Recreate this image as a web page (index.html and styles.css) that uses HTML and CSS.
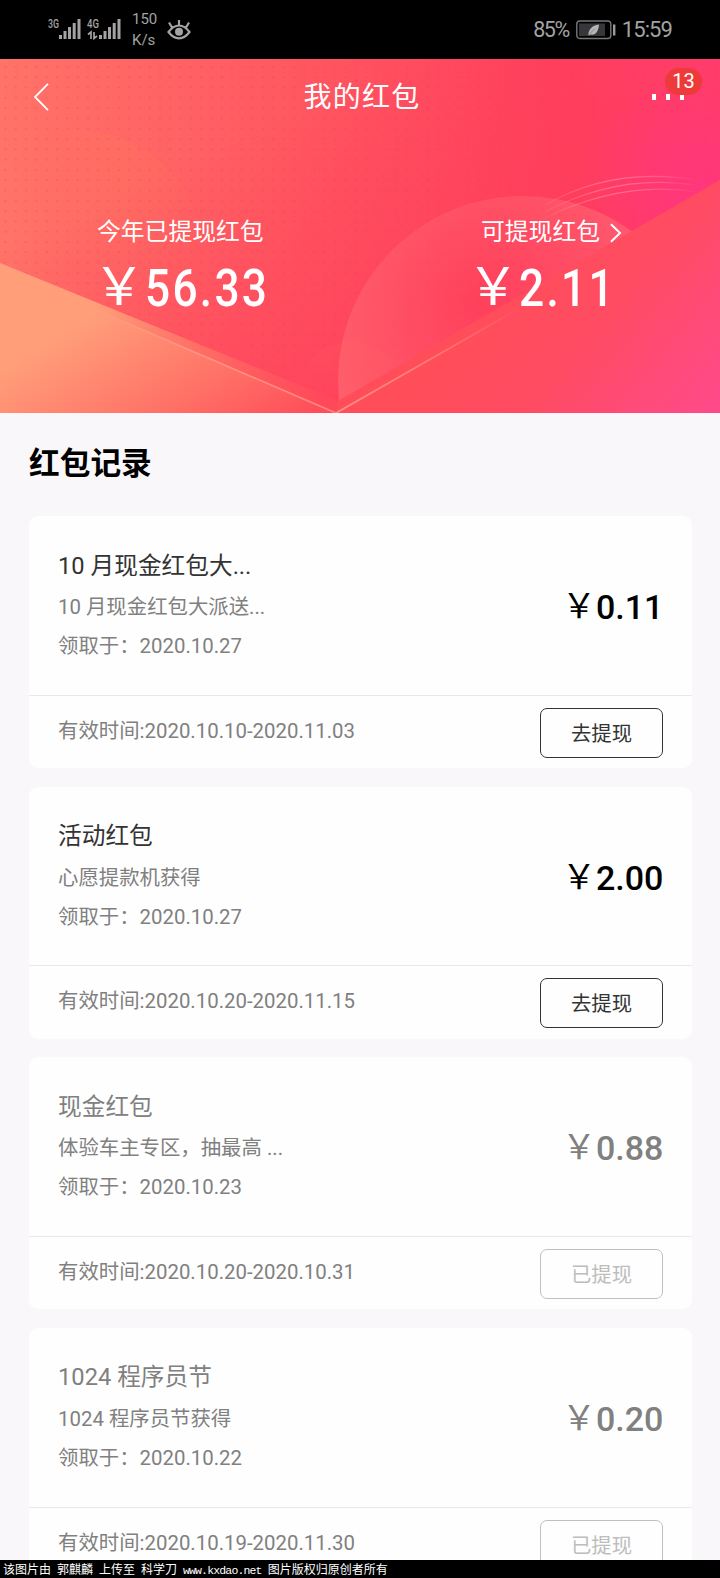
FILE: index.html
```html
<!DOCTYPE html>
<html lang="zh-CN">
<head>
<meta charset="utf-8">
<title>我的红包</title>
<link rel="stylesheet" href="styles.css">
</head>
<body>
<div class="screen">
  <div class="status">
    <svg class="signals" width="76" height="28" viewBox="0 0 76 28">
      <g fill="#a3a3a3">
        <text class="net" x="0" y="13" textLength="11" lengthAdjust="spacingAndGlyphs">3G</text>
        <text class="net" x="39" y="13" textLength="12" lengthAdjust="spacingAndGlyphs">4G</text>
        <rect x="11" y="20" width="3" height="4"/><rect x="15.500" y="16" width="3" height="8"/><rect x="20" y="12" width="3" height="12"/><rect x="24.700" y="8" width="3" height="16"/><rect x="29.500" y="4" width="3" height="20"/>
        <rect x="51" y="20" width="3" height="4"/><rect x="55.500" y="16" width="3" height="8"/><rect x="60" y="12" width="3" height="12"/><rect x="64.700" y="8" width="3" height="16"/><rect x="69.500" y="4" width="3" height="20"/>
      </g>
      <path d="M40 19.500L43 17v7M46 17v6.500l3-2.500" fill="none" stroke="#a3a3a3" stroke-width="1.700"/>
    </svg>
    <div class="speed"><span>150</span><span>K/s</span></div>
    <svg class="eye" width="24" height="22" viewBox="0 0 24 22" fill="none" stroke="#a3a3a3" stroke-width="2.200">
      <path d="M1.500 13C5 8.200 8.500 6.500 12 6.500S19 8.200 22.500 13C19 17.600 15.500 19.300 12 19.300S5 17.600 1.500 13ZM12 6.500V1M5 8.500L2 3.500M19 8.500l3-5"/>
      <circle cx="12" cy="12.700" r="4" fill="#a3a3a3" stroke="none"/>
    </svg>
    <span class="percent">85%</span>
    <svg class="battery" width="40" height="20" viewBox="0 0 40 20">
      <rect x=".8" y="1" width="34" height="17.500" rx="3" fill="none" stroke="#777" stroke-width="1.400"/>
      <rect x="3" y="3.500" width="26" height="12.500" fill="#38363a"/>
      <rect x="37" y="4.500" width="2.400" height="11" fill="#9a9a9a"/>
      <path d="M12.500 15.500C12 9.500 16 5.500 23 4.500C22.500 11 20 15.500 14.500 14.500L12.500 15.500Z" fill="#b5b5b5"/>
      <path d="M13.500 14L19 8.500" stroke="#666" stroke-width=".6"/>
    </svg>
    <span class="clock">15:59</span>
  </div>

  <div class="hero">
    <svg class="hero-art" width="720" height="354" viewBox="0 59 720 354" preserveAspectRatio="none">
      <defs>
        <linearGradient id="base" gradientUnits="userSpaceOnUse" x1="0" y1="120" x2="720" y2="60">
          <stop offset="0" stop-color="#ff7368"/><stop offset=".45" stop-color="#ff5560"/><stop offset=".78" stop-color="#ff3f5c"/><stop offset="1" stop-color="#ff3c76"/>
        </linearGradient>
        <linearGradient id="shade" gradientUnits="userSpaceOnUse" x1="190" y1="160" x2="300" y2="400">
          <stop offset="0" stop-color="#ff3c5a" stop-opacity="0"/><stop offset="1" stop-color="#ff3c5a" stop-opacity=".7"/>
        </linearGradient>
        <radialGradient id="pink" gradientUnits="userSpaceOnUse" cx="700" cy="195" r="125">
          <stop offset="0" stop-color="#ff3488" stop-opacity=".7"/><stop offset="1" stop-color="#ff3488" stop-opacity="0"/>
        </radialGradient>
        <linearGradient id="sun" gradientUnits="userSpaceOnUse" x1="150" y1="130" x2="130" y2="290">
          <stop offset="0" stop-color="#ff7d58" stop-opacity=".3"/><stop offset="1" stop-color="#ff7d58" stop-opacity="0"/>
        </linearGradient>
        <linearGradient id="sunFade" gradientUnits="userSpaceOnUse" x1="30" y1="0" x2="215" y2="0">
          <stop offset="0" stop-color="#000"/><stop offset=".5" stop-color="#fff"/><stop offset="1" stop-color="#000"/>
        </linearGradient>
        <mask id="sunMask" maskUnits="userSpaceOnUse" x="0" y="59" width="720" height="354"><rect y="59" width="720" height="354" fill="url(#sunFade)"/></mask>
        <radialGradient id="moon" gradientUnits="userSpaceOnUse" cx="480" cy="300" r="175">
          <stop offset="0" stop-color="#ff7080" stop-opacity="0"/><stop offset="1" stop-color="#ff7b7b" stop-opacity=".5"/>
        </radialGradient>
        <linearGradient id="left" gradientUnits="userSpaceOnUse" x1="70" y1="330" x2="175" y2="500">
          <stop offset="0" stop-color="#ff9e79"/><stop offset=".6" stop-color="#ff7066"/><stop offset="1" stop-color="#ff4d5a"/>
        </linearGradient>
        <linearGradient id="right" gradientUnits="userSpaceOnUse" x1="510" y1="270" x2="700" y2="430">
          <stop offset="0" stop-color="#ff4d5a"/><stop offset=".4" stop-color="#ff4c62"/><stop offset="1" stop-color="#ff4a8a"/>
        </linearGradient>
        <linearGradient id="fold" gradientUnits="userSpaceOnUse" x1="90" y1="0" x2="330" y2="0"><stop offset="0" stop-color="#ff505a" stop-opacity="0"/><stop offset="1" stop-color="#ff465a" stop-opacity=".7"/></linearGradient>
        <linearGradient id="edgeL" x1="0" x2="1"><stop offset="0" stop-color="#ffb49c" stop-opacity="0"/><stop offset=".5" stop-color="#ff9a88" stop-opacity=".85"/><stop offset="1" stop-color="#ff8d82" stop-opacity=".9"/></linearGradient>
        <linearGradient id="edgeR" x1="0" x2="1"><stop offset="0" stop-color="#ff8f86"/><stop offset=".4" stop-color="#ff7f7a"/><stop offset="1" stop-color="#ff8a84" stop-opacity="0"/></linearGradient>
        <linearGradient id="ring" gradientUnits="userSpaceOnUse" x1="535" y1="0" x2="700" y2="0"><stop offset="0" stop-color="#fff" stop-opacity="0"/><stop offset=".5" stop-color="#ffc0d0" stop-opacity=".38"/><stop offset="1" stop-color="#fff" stop-opacity="0"/></linearGradient>
        <linearGradient id="hump" gradientUnits="userSpaceOnUse" x1="0" y1="342" x2="0" y2="400"><stop offset="0" stop-color="#ff6660" stop-opacity=".15"/><stop offset="1" stop-color="#ff6660" stop-opacity="0"/></linearGradient>
        <pattern id="dots" patternUnits="userSpaceOnUse" x="0" y="62" width="10.300" height="10.300"><circle cx="5.500" cy="5" r="1.200" fill="#e83752" fill-opacity=".24"/></pattern>
      </defs>
      <rect y="59" width="720" height="354" fill="url(#base)"/>
      <rect y="59" width="720" height="354" fill="url(#shade)"/>
      <rect y="59" width="720" height="354" fill="url(#pink)"/>
      <circle cx="75" cy="260" r="130" fill="url(#sun)" mask="url(#sunMask)"/>
      <rect y="59" width="720" height="354" fill="url(#dots)"/>
      <circle cx="523" cy="381" r="185" fill="url(#moon)"/>
      <circle cx="350" cy="395" r="53" fill="url(#hump)"/>
      <g fill="none" stroke="url(#ring)" stroke-width="1.200">
        <path d="M545 205Q615 165 702 181"/><path d="M545 212Q620 172 700 186"/><path d="M545 218Q622 180 698 192"/>
      </g>
      <path d="M720 180L338 401L320 413H720Z" fill="url(#right)"/>
      <path d="M0 263L338 401L336 413H0Z" fill="url(#left)"/>
      <path d="M0 263L338 401L336 413L90 307Z" fill="url(#fold)"/>
      <path d="M90 307L336 413" stroke="url(#edgeL)" stroke-width="1.600"/>
      <path d="M336 413L520 308" stroke="url(#edgeR)" stroke-width="1.800"/>
    </svg>
    <div class="nav">
      <svg class="back" width="16" height="28" viewBox="0 0 16 28" fill="none" stroke="#fff" stroke-width="1.800"><path d="M14 .8L1 14l13 13.200"/></svg>
      <h1 class="nav-title">我的红包</h1>
      <div class="more"><i></i><i></i><i></i><span class="badge">13</span></div>
    </div>
    <div class="stats">
      <div class="stat">
        <div class="stat-label">今年已提现红包</div>
        <div class="stat-value"><span class="yen">￥</span><span class="num">56.33</span></div>
      </div>
      <div class="stat">
        <div class="stat-label">可提现红包<svg class="go" width="12" height="20" viewBox="0 0 12 20" fill="none" stroke="#fff" stroke-width="2"><path d="M1 1.200L10 10l-9 8.800"/></svg></div>
        <div class="stat-value"><span class="yen">￥</span><span class="num">2.11</span></div>
      </div>
    </div>
  </div>

  <div class="records">
    <h2 class="heading">红包记录</h2>
    <div class="list">
      <div class="card">
        <div class="body">
          <div class="info"><div class="name">10 月现金红包大...</div><div class="line">10 月现金红包大派送...</div><div class="line">领取于：2020.10.27</div></div>
          <div class="amount"><span class="sign">￥</span>0.11</div>
        </div>
        <div class="foot"><span class="valid">有效时间:2020.10.10-2020.11.03</span><button class="btn">去提现</button></div>
      </div>
      <div class="card">
        <div class="body">
          <div class="info"><div class="name">活动红包</div><div class="line">心愿提款机获得</div><div class="line">领取于：2020.10.27</div></div>
          <div class="amount"><span class="sign">￥</span>2.00</div>
        </div>
        <div class="foot"><span class="valid">有效时间:2020.10.20-2020.11.15</span><button class="btn">去提现</button></div>
      </div>
      <div class="card used">
        <div class="body">
          <div class="info"><div class="name">现金红包</div><div class="line">体验车主专区，抽最高 ...</div><div class="line">领取于：2020.10.23</div></div>
          <div class="amount"><span class="sign">￥</span>0.88</div>
        </div>
        <div class="foot"><span class="valid">有效时间:2020.10.20-2020.10.31</span><button class="btn">已提现</button></div>
      </div>
      <div class="card used">
        <div class="body">
          <div class="info"><div class="name">1024 程序员节</div><div class="line">1024 程序员节获得</div><div class="line">领取于：2020.10.22</div></div>
          <div class="amount"><span class="sign">￥</span>0.20</div>
        </div>
        <div class="foot"><span class="valid">有效时间:2020.10.19-2020.11.30</span><button class="btn">已提现</button></div>
      </div>
    </div>
  </div>
  <div class="credit">该图片由 郭麒麟 上传至 科学刀 <span class="url">www.kxdao.net</span> 图片版权归原创者所有</div>
</div>
</body>
</html>
```
FILE: styles.css
```css
* { box-sizing: border-box; }
body { margin: 0; background: #f9f7fa; font-family: Roboto, "Noto Sans CJK SC", sans-serif; }
h1, h2 { margin: 0; }
svg { display: block; flex: none; }
.screen { width: 720px; height: 1578px; display: flex; flex-direction: column; overflow: hidden; background: #f9f7fa; }

.status { height: 59px; flex: none; background: #000; color: #a3a3a3; display: flex; align-items: center; padding: 0 48px; }
.signals { margin-top: -1px; }
.net { font: 500 12px Roboto, sans-serif; }
.speed { display: flex; flex-direction: column; font-size: 15px; line-height: 21px; margin-left: 8px; width: 35px; }
.eye { margin-top: 1px; }
.percent { margin-left: auto; font-size: 21.500px; letter-spacing: -1.500px; }
.battery { margin: 0 6px 0 7px; }
.clock { font-size: 22px; letter-spacing: -.9px; }

.hero { position: relative; height: 354px; flex: none; color: #fff; }
.hero-art { position: absolute; inset: 0; }
.nav { position: relative; height: 76px; display: grid; grid-template-columns: 1fr auto 1fr; align-items: center; padding: 0 34px; }
.nav-title { font-size: 28px; font-weight: 400; letter-spacing: 1.200px; line-height: 40px; margin: 2px -4px 0 0; }
.more { position: relative; justify-self: end; display: flex; gap: 10px; padding-right: 2px; }
.more i { width: 4px; height: 6px; background: #fff; }
.badge { position: absolute; right: -16px; top: -26px; width: 37px; height: 27px; border-radius: 14px; background: #ee3a38; text-align: center; font: 20px/26px Roboto, sans-serif; }
.stats { position: relative; display: grid; grid-template-columns: 384px 1fr; padding: 79px 0 0 97px; }
.stat-label { display: flex; align-items: center; font-size: 23.800px; line-height: 36px; }
.go { margin: 1px 0 0 10px; }
.stat-value { display: flex; align-items: center; margin: 9px 0 0 -4px; height: 60px; font-size: 52px; line-height: 60px; }
.stat + .stat .stat-value { margin-left: -14px; }
.yen { width: 52px; margin-top: -12px; font: 52px/60px "Noto Sans CJK SC", sans-serif; }
.num { font-weight: 500; letter-spacing: 2.700px; transform: scaleX(.85); transform-origin: left; }

.records { flex: 1; min-height: 0; overflow: hidden; padding: 0 28px 0 29px; }
.heading { height: 103px; font-size: 30.700px; line-height: 101px; font-weight: 700; color: #000; }
.list { display: flex; flex-direction: column; gap: 18.600px; }
.card { height: 252px; border-radius: 9px; background: #fefefe; color: #333; flex: none; }
.body { height: 179.900px; padding: 31.700px 29px 0; display: flex; justify-content: space-between; border-bottom: 1px solid #e9e9e9; }
.name { font-size: 23.700px; line-height: 36px; margin-bottom: 4.300px; }
.line, .valid { font-size: 20.400px; line-height: 39px; color: #808080; white-space: nowrap; }
.valid { margin-top: -1px; }
.amount { margin-top: 39.300px; font-size: 34px; line-height: 40px; font-weight: 500; color: #000; width: 101px; white-space: nowrap; }
.sign { font-weight: 400; position: relative; top: -1px; }
.foot { height: 72px; padding: 0 29px; display: flex; justify-content: space-between; align-items: center; }
.btn { width: 123px; height: 50px; margin-top: 2px; border: 1.500px solid #333; border-radius: 7px; background: none; color: #333; font: 20.400px "Noto Sans CJK SC", sans-serif; padding: 0 0 2px; }
.used { color: #808080; }
.used .amount { color: #808080; }
.used .btn { color: #bdbdbd; border-color: #c0c0c0; }

.credit { height: 18px; flex: none; background: #000; color: #fff; font: 12px/18px "Noto Sans CJK SC", sans-serif; padding-left: 3px; word-spacing: 3.300px; white-space: nowrap; }
.url { font: 11.500px "Liberation Mono", monospace; letter-spacing: -.85px; }
```
